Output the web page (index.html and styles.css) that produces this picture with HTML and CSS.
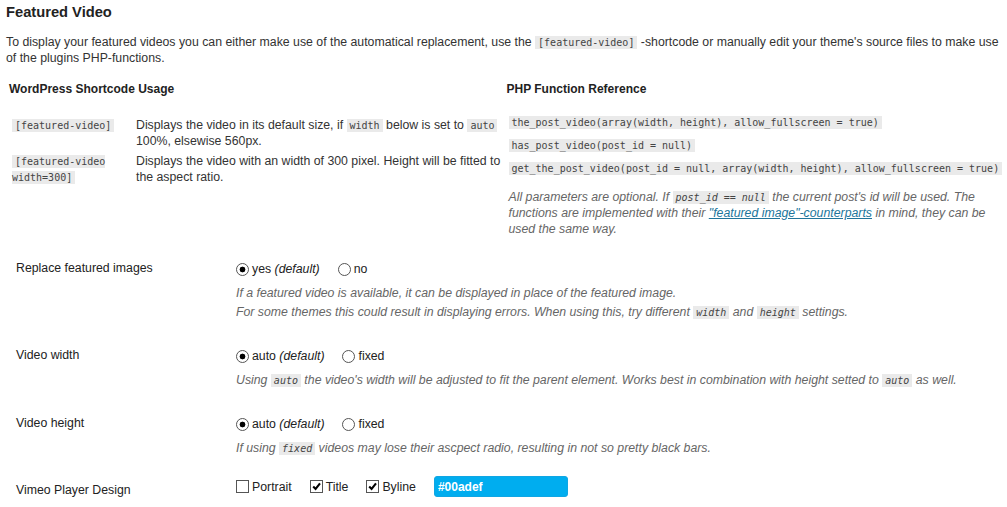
FILE: index.html
```html
<!DOCTYPE html>
<html lang="en">
<head>
<meta charset="utf-8">
<title>Featured Video</title>
<link rel="stylesheet" href="styles.css">
</head>
<body>
<div class="page">
  <h2 class="title">Featured Video</h2>
  <p class="intro">To display your featured videos you can either make use of the automatical replacement, use the <code>[featured-video]</code> -shortcode or manually edit your theme's source files to make use of the plugins PHP-functions.</p>

  <div class="ref">
    <section class="ref-col ref-left">
      <h3>WordPress Shortcode Usage</h3>
      <div class="sc-rows">
        <div class="sc-row">
          <div class="sc-code"><code>[featured-video]</code></div>
          <div class="sc-desc">Displays the video in its default size, if <code>width</code> below is set to <code>auto</code> 100%, elsewise 560px.</div>
        </div>
        <div class="sc-row">
          <div class="sc-code"><code>[featured-video width=300]</code></div>
          <div class="sc-desc">Displays the video with an width of 300 pixel. Height will be fitted to the aspect ratio.</div>
        </div>
      </div>
    </section>
    <section class="ref-col ref-right">
      <h3>PHP Function Reference</h3>
      <div class="funcs">
        <div class="func"><code>the_post_video(array(width, height), allow_fullscreen = true)</code></div>
        <div class="func"><code>has_post_video(post_id = null)</code></div>
        <div class="func"><code>get_the_post_video(post_id = null, array(width, height), allow_fullscreen = true)</code></div>
      </div>
      <p class="note">All parameters are optional. If <code>post_id == null</code> the current post's id will be used. The functions are implemented with their <a href="#">"featured image"-counterparts</a> in mind, they can be used the same way.</p>
    </section>
  </div>

  <div class="settings">
    <div class="setting">
      <div class="setting-label">Replace featured images</div>
      <div class="setting-field">
        <div class="options">
          <label class="opt"><span class="radio checked"></span><span>yes <em>(default)</em></span></label>
          <label class="opt"><span class="radio"></span><span>no</span></label>
        </div>
        <p class="desc">If a featured video is available, it can be displayed in place of the featured image.<br>For some themes this could result in displaying errors. When using this, try different <code>width</code> and <code>height</code> settings.</p>
      </div>
    </div>

    <div class="setting">
      <div class="setting-label">Video width</div>
      <div class="setting-field">
        <div class="options">
          <label class="opt"><span class="radio checked"></span><span>auto <em>(default)</em></span></label>
          <label class="opt"><span class="radio"></span><span>fixed</span></label>
        </div>
        <p class="desc">Using <code>auto</code> the video's width will be adjusted to fit the parent element. Works best in combination with height setted to <code>auto</code> as well.</p>
      </div>
    </div>

    <div class="setting">
      <div class="setting-label">Video height</div>
      <div class="setting-field">
        <div class="options">
          <label class="opt"><span class="radio checked"></span><span>auto <em>(default)</em></span></label>
          <label class="opt"><span class="radio"></span><span>fixed</span></label>
        </div>
        <p class="desc">If using <code>fixed</code> videos may lose their ascpect radio, resulting in not so pretty black bars.</p>
      </div>
    </div>

    <div class="setting vimeo">
      <div class="setting-label">Vimeo Player Design</div>
      <div class="setting-field">
        <div class="options">
          <label class="opt"><span class="checkbox"></span><span>Portrait</span></label>
          <label class="opt"><span class="checkbox"><svg viewBox="0 0 11 11" width="11" height="11"><path d="M2.2 5.4 L4.6 7.9 L9 2.4" fill="none" stroke="#000" stroke-width="2.1"/></svg></span><span>Title</span></label>
          <label class="opt"><span class="checkbox"><svg viewBox="0 0 11 11" width="11" height="11"><path d="M2.2 5.4 L4.6 7.9 L9 2.4" fill="none" stroke="#000" stroke-width="2.1"/></svg></span><span>Byline</span></label>
          <input class="color" type="text" value="#00adef">
        </div>
      </div>
    </div>
  </div>
</div>
</body>
</html>
```

FILE: styles.css
```css
body {
  margin: 0;
  background: #fff;
  color: #333;
  font-family: "Liberation Sans", Arial, sans-serif;
  font-size: 12.3px;
}

.page {
  padding: 0 6px;
}

.title {
  margin: 2px 0 0;
  font-size: 14.7px;
  line-height: 20px;
  font-weight: bold;
  color: #222;
}

.intro {
  margin: 12px 0 0;
  line-height: 16px;
}

code {
  font-family: "DejaVu Sans Mono", "Liberation Mono", monospace;
  font-size: 10px;
  line-height: 1;
  background: #eaeaea;
  padding: 1px 3px;
  color: #444;
}

.ref {
  display: grid;
  grid-template-columns: 1fr 1fr;
  margin-top: 15px;
}

.ref-col {
  padding-left: 3px;
  min-width: 0;
}

.ref-col h3 {
  margin: 0;
  font-size: 12px;
  line-height: 16px;
  font-weight: bold;
  color: #222;
}

.sc-rows {
  margin-top: 20px;
  display: flex;
  flex-direction: column;
  gap: 4px;
  line-height: 16px;
}

.sc-row {
  display: grid;
  grid-template-columns: 127px 1fr;
}

.sc-code {
  padding-left: 3px;
}

.funcs {
  margin-top: 17px;
  padding-left: 2px;
  display: flex;
  flex-direction: column;
  gap: 7px;
  line-height: 16px;
  white-space: nowrap;
}

.note {
  margin: 13px 0 0;
  padding-left: 2px;
  line-height: 16px;
  font-style: italic;
  color: #666;
}

.note a {
  color: #21759b;
  text-decoration: underline;
}

.settings {
  margin-top: 22px;
}

.setting {
  display: grid;
  grid-template-columns: 220px 1fr;
}

.setting + .setting {
  margin-top: 24px;
}

.setting.vimeo {
  margin-top: 18px;
}

.setting-label {
  padding-left: 10px;
  line-height: 18px;
  color: #222;
}

.setting-field {
  padding-left: 10px;
  padding-top: 1px;
}

.vimeo .setting-label {
  padding-top: 5px;
}

.vimeo .setting-field {
  padding-top: 0;
}

.options {
  display: flex;
  align-items: center;
  gap: 18px;
  height: 18px;
  color: #222;
}

.vimeo .options {
  height: 21px;
}

.opt {
  display: flex;
  align-items: center;
  gap: 3px;
}

.radio {
  width: 11px;
  height: 11px;
  border: 1px solid #555;
  border-radius: 50%;
  background: #fff;
  flex: none;
}

.radio.checked {
  background: radial-gradient(circle, #000 0 2.6px, #fff 3.2px);
}

.checkbox {
  width: 11px;
  height: 11px;
  border: 1px solid #555;
  background: #fff;
  flex: none;
  display: flex;
}

.desc {
  margin: 6px 0 0;
  line-height: 19px;
  font-style: italic;
  color: #666;
}

.color {
  margin-left: 0;
  width: 134px;
  height: 21px;
  box-sizing: border-box;
  padding: 0 3px;
  border: 1px solid #10a6e3;
  border-radius: 3px;
  background: #00adef;
  color: #fff;
  font-family: "Liberation Sans", Arial, sans-serif;
  font-size: 12px;
  font-weight: bold;
  outline: none;
}
```
